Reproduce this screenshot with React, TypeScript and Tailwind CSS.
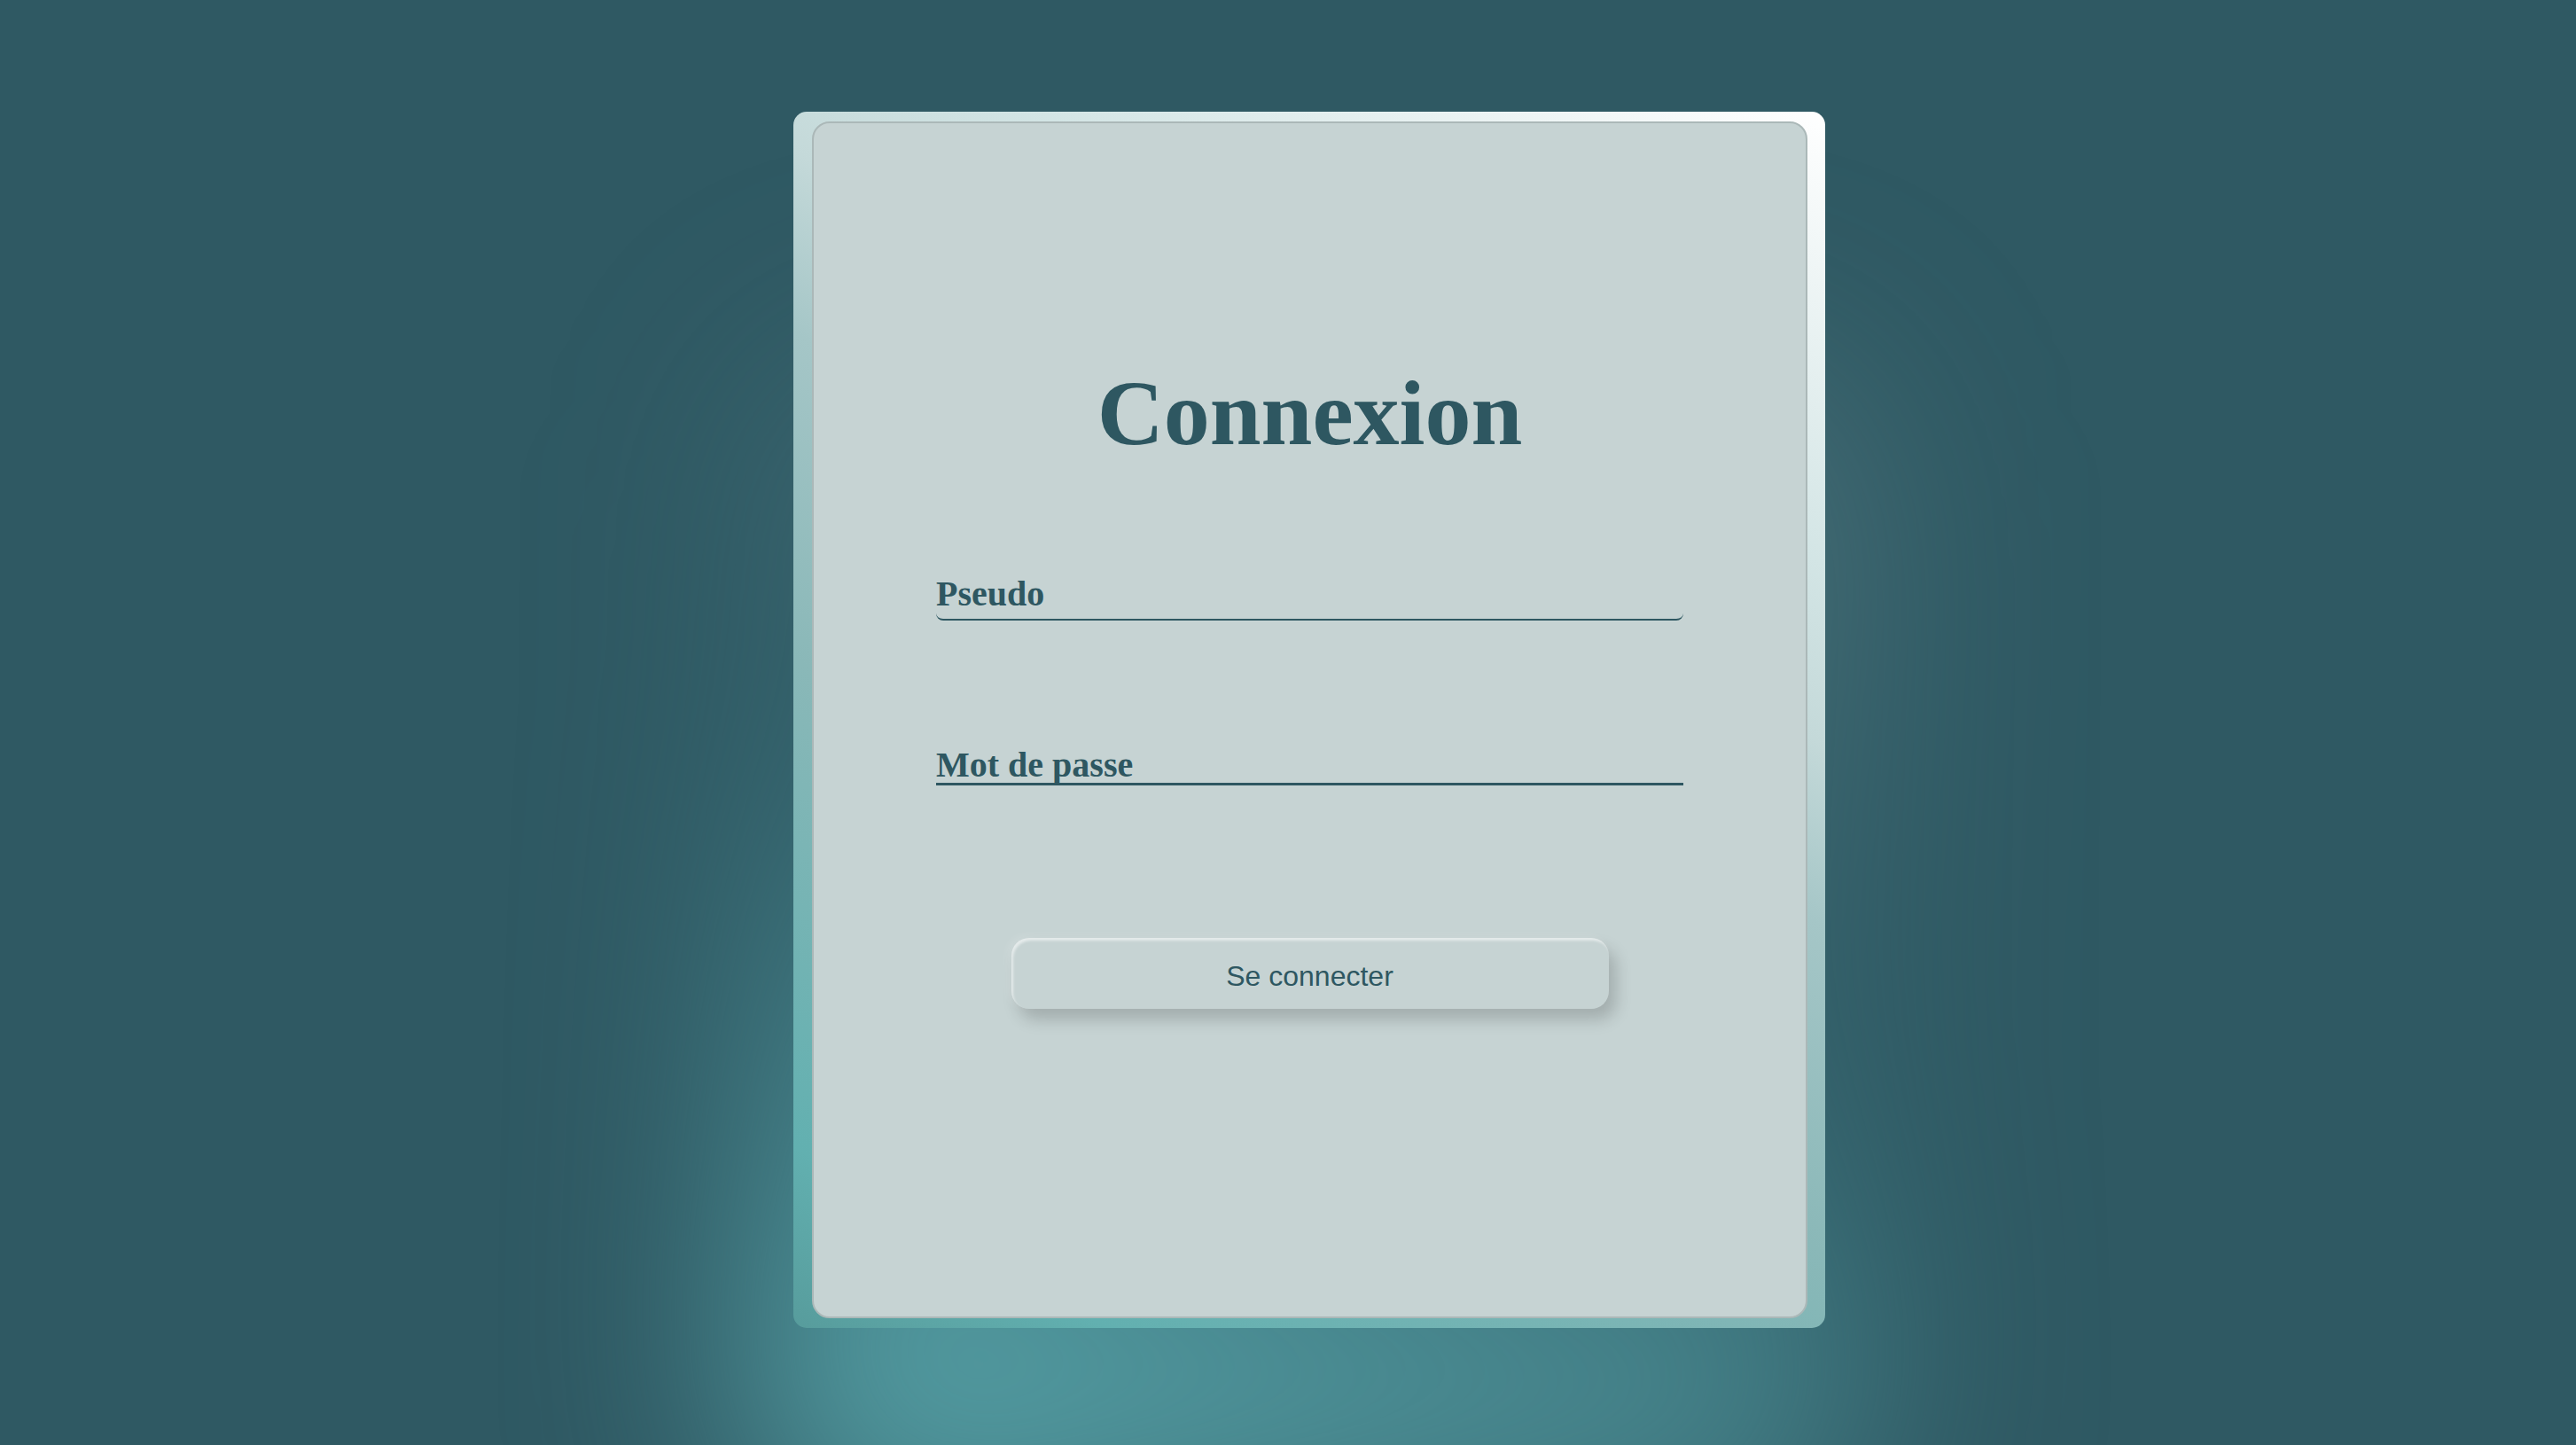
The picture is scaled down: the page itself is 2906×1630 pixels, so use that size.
import React, { useState } from 'react'

export default function App() {
  const [pseudo, setPseudo] = useState('')
  const [password, setPassword] = useState('')

  return (
    <div className="min-h-screen w-full bg-[#2f5963] flex justify-center pt-[126px] pl-[48px] overflow-hidden">
      <div className="relative w-[1164px] h-[1372px]">
        {/* soft glow behind the card */}
        <div className="absolute inset-x-[-50px] top-[280px] bottom-[-240px] rounded-[160px] bg-[linear-gradient(200deg,rgba(150,180,185,0.3)_0%,rgba(60,115,125,0.25)_45%,rgba(95,178,182,1)_100%)] blur-[120px]" />

        <div className="relative h-full rounded-[15px] pl-[21px] pr-[20px] py-[11px] bg-[linear-gradient(210deg,#ffffff_0%,#d3e5e5_25%,#c4d9d9_35%,#a5c6c7_45%,#8ab8b8_63%,#62b0b0_90%,#579c9c_100%)]">
          <div className="h-full rounded-[20px] border-2 border-[#abb8b8] bg-[#c6d3d3] flex flex-col items-center pt-[275px]">
            <h1 className="h-[104px] text-[104px] leading-none font-bold text-[#2e5761] font-['Liberation_Serif',serif]">
              Connexion
            </h1>

            <form className="w-[843px] flex flex-col" onSubmit={(e) => e.preventDefault()}>
              <label className="mt-[132px] block border-b-2 border-[#2e5761] rounded-b-[8px] pb-[8px] cursor-text">
                <span className="block h-[40px] text-[40px] leading-none font-bold text-[#2e5761] font-['Liberation_Serif',serif]">
                  {pseudo ? '' : 'Pseudo'}
                </span>
                <input
                  type="text"
                  value={pseudo}
                  onChange={(e) => setPseudo(e.target.value)}
                  className="sr-only"
                />
              </label>

              <label className="mt-[143px] block border-b-[3px] border-[#2e5761] cursor-text">
                <span className="block h-[40px] text-[40px] leading-none font-bold text-[#2e5761] font-['Liberation_Serif',serif]">
                  {password ? '' : 'Mot de passe'}
                </span>
                <input
                  type="password"
                  value={password}
                  onChange={(e) => setPassword(e.target.value)}
                  className="sr-only"
                />
              </label>
            </form>

            <button
              type="button"
              className="mt-[172px] w-[674px] h-[80px] pt-[5px] rounded-[20px] bg-[#c6d3d3] text-[32px] text-[#2e5761] font-['Liberation_Sans',sans-serif] shadow-[inset_2px_3px_3px_rgba(255,255,255,0.55),8px_12px_18px_rgba(0,0,0,0.18),-4px_-2px_10px_rgba(255,255,255,0.15)]"
            >
              Se connecter
            </button>
          </div>
        </div>
      </div>
    </div>
  )
}
